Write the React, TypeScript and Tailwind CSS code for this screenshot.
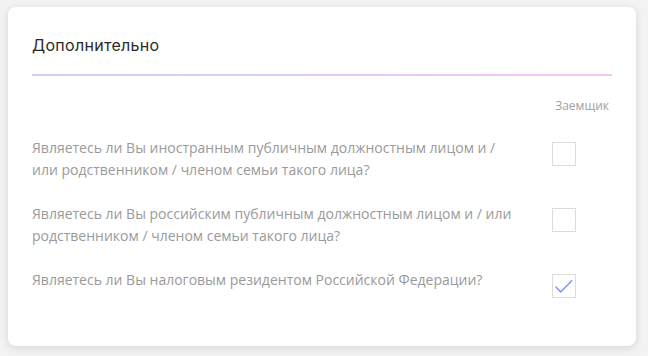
import React from "react";

const rows = [
  { text: "Являетесь ли Вы иностранным публичным должностным лицом и / или родственником / членом семьи такого лица?", checked: false },
  { text: "Являетесь ли Вы российским публичным должностным лицом и / или родственником / членом семьи такого лица?", checked: false },
  { text: "Являетесь ли Вы налоговым резидентом Российской Федерации?", checked: true },
];

function Box({ checked }: { checked: boolean }) {
  return (
    <div className="w-[24px] h-[24px] border border-[#dcdcdc] bg-white box-border relative">
      {checked && (
        <svg width="24" height="24" viewBox="0 0 24 24" className="absolute left-[-1px] top-[-1px]">
          <polyline points="4,13 8.7,18 19.7,6.7" fill="none" stroke="#7f8ffb" strokeWidth="1.4" strokeLinecap="round" strokeLinejoin="round" />
        </svg>
      )}
    </div>
  );
}

export default function App() {
  return (
    <div className="w-[648px] h-[356px] bg-[#f3f3f3] pt-[7px] pl-[8px] overflow-hidden">
      <div className="w-[628px] h-[339px] bg-white rounded-[8px] shadow-[0_2px_8px_rgba(0,0,0,0.12)] px-[24px] pt-[28px]">
        <div className="text-[16px] leading-[20px] tracking-[0.3px] text-[#2a2a2a] font-['Inter',sans-serif]">Дополнительно</div>
        <div className="mt-[19px] h-[2px] bg-gradient-to-r from-[#cdd0fa] to-[#f6c6f2]" />
        <div className="mt-[22px] flex justify-end pr-[3px] text-[12px] leading-[16px] text-[#a0a0a0] font-['Open_Sans',sans-serif]">Заемщик</div>
        <div className="mt-[23px] flex flex-col gap-[22px]">
          {rows.map((r, i) => (
            <div key={i} className="flex items-start">
              <div className="w-[502px] pr-[16px] text-[14px] leading-[22px] text-[#9a9a9a] font-['Open_Sans',sans-serif]">{r.text}</div>
              <div className="ml-[18px] mt-[5px]">
                <Box checked={r.checked} />
              </div>
            </div>
          ))}
        </div>
      </div>
    </div>
  );
}
